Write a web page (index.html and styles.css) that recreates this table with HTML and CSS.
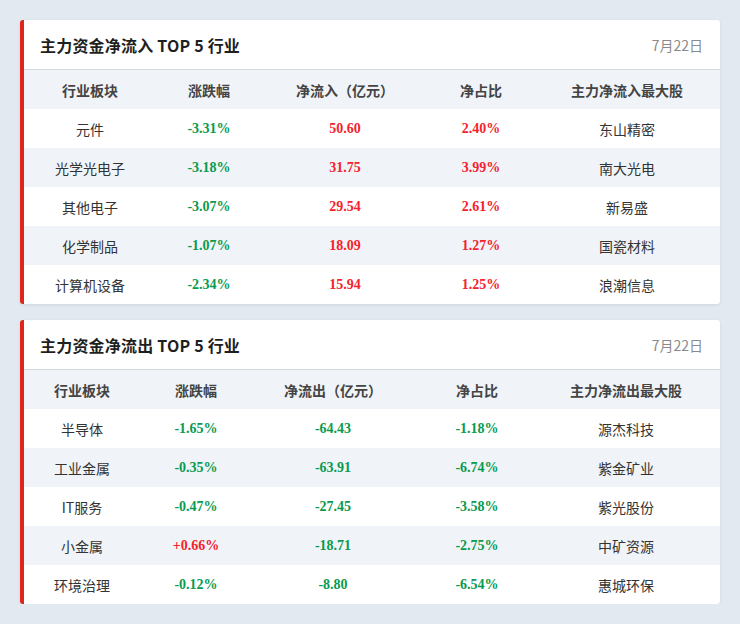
FILE: index.html
```html
<!DOCTYPE html>
<html lang="zh">
<head>
<meta charset="utf-8">
<link rel="stylesheet" href="styles.css">
</head>
<body>
<div class="page">
  <section class="card">
    <div class="card-head">
      <h2 class="title">主力资金净流入 TOP 5 行业</h2>
      <span class="date">7月22日</span>
    </div>
    <table class="grid in">
      <colgroup><col class="c1"><col class="c2"><col class="c3"><col class="c4"><col class="c5"></colgroup>
      <thead>
        <tr><th>行业板块</th><th>涨跌幅</th><th>净流入（亿元）</th><th>净占比</th><th class="last">主力净流入最大股</th></tr>
      </thead>
      <tbody>
        <tr><td class="name">元件</td><td class="num down">-3.31%</td><td class="num up">50.60</td><td class="num up">2.40%</td><td class="name last">东山精密</td></tr>
        <tr><td class="name">光学光电子</td><td class="num down">-3.18%</td><td class="num up">31.75</td><td class="num up">3.99%</td><td class="name last">南大光电</td></tr>
        <tr><td class="name">其他电子</td><td class="num down">-3.07%</td><td class="num up">29.54</td><td class="num up">2.61%</td><td class="name last">新易盛</td></tr>
        <tr><td class="name">化学制品</td><td class="num down">-1.07%</td><td class="num up">18.09</td><td class="num up">1.27%</td><td class="name last">国瓷材料</td></tr>
        <tr><td class="name">计算机设备</td><td class="num down">-2.34%</td><td class="num up">15.94</td><td class="num up">1.25%</td><td class="name last">浪潮信息</td></tr>
      </tbody>
    </table>
  </section>

  <section class="card">
    <div class="card-head">
      <h2 class="title">主力资金净流出 TOP 5 行业</h2>
      <span class="date">7月22日</span>
    </div>
    <table class="grid out">
      <colgroup><col class="c1"><col class="c2"><col class="c3"><col class="c4"><col class="c5"></colgroup>
      <thead>
        <tr><th>行业板块</th><th>涨跌幅</th><th>净流出（亿元）</th><th>净占比</th><th class="last">主力净流出最大股</th></tr>
      </thead>
      <tbody>
        <tr><td class="name">半导体</td><td class="num down">-1.65%</td><td class="num down">-64.43</td><td class="num down">-1.18%</td><td class="name last">源杰科技</td></tr>
        <tr><td class="name">工业金属</td><td class="num down">-0.35%</td><td class="num down">-63.91</td><td class="num down">-6.74%</td><td class="name last">紫金矿业</td></tr>
        <tr><td class="name">IT服务</td><td class="num down">-0.47%</td><td class="num down">-27.45</td><td class="num down">-3.58%</td><td class="name last">紫光股份</td></tr>
        <tr><td class="name">小金属</td><td class="num up">+0.66%</td><td class="num down">-18.71</td><td class="num down">-2.75%</td><td class="name last">中矿资源</td></tr>
        <tr><td class="name">环境治理</td><td class="num down">-0.12%</td><td class="num down">-8.80</td><td class="num down">-6.54%</td><td class="name last">惠城环保</td></tr>
      </tbody>
    </table>
  </section>
</div>
</body>
</html>
```

FILE: styles.css
```css
html, body {
  margin: 0;
  padding: 0;
  background: #e3e9f0;
}
body {
  font-family: "Noto Sans CJK SC", "Noto Sans", sans-serif;
  color: #333;
}
.page {
  padding: 20px 20px 0 20px;
  display: flex;
  flex-direction: column;
  gap: 16px;
}
.card {
  background: #fff;
  border-left: 4px solid #e0261c;
  border-radius: 3px;
  box-shadow: 0 1px 3px rgba(60, 80, 110, 0.12);
  overflow: hidden;
}
.card-head {
  height: 49px;
  border-bottom: 1px solid #d4d8dd;
  display: flex;
  align-items: center;
  justify-content: space-between;
  padding: 0 17px 0 16px;
}
.title {
  margin: 0;
  font-size: 16px;
  font-weight: 700;
  color: #1f1f1f;
  line-height: 20px;
  letter-spacing: 0.2px;
}
.date {
  font-size: 14px;
  color: #8a8a8a;
}
.grid {
  width: 100%;
  border-collapse: collapse;
  table-layout: fixed;
}
.grid th {
  height: 39px;
  padding: 0;
  background: #f0f4f8;
  font-size: 14px;
  font-weight: 700;
  color: #444;
  text-align: center;
}
.grid td {
  height: 39px;
  padding: 0;
  text-align: center;
  font-size: 14px;
}
.out .last {
  padding-right: 8px;
}
.grid tbody tr:nth-child(even) td {
  background: #f0f4f8;
}
.name {
  color: #333;
}
.num {
  font-family: "Liberation Serif", "Times New Roman", serif;
  font-weight: 700;
}
.up { color: #f5222d; }
.down { color: #0a9a4e; }

.in .c1 { width: 132px; }
.in .c2 { width: 106px; }
.in .c3 { width: 166px; }
.in .c4 { width: 106px; }
.in .c5 { width: auto; }

.out .c1 { width: 116px; }
.out .c2 { width: 112px; }
.out .c3 { width: 162px; }
.out .c4 { width: 126px; }
.out .c5 { width: auto; }
```
